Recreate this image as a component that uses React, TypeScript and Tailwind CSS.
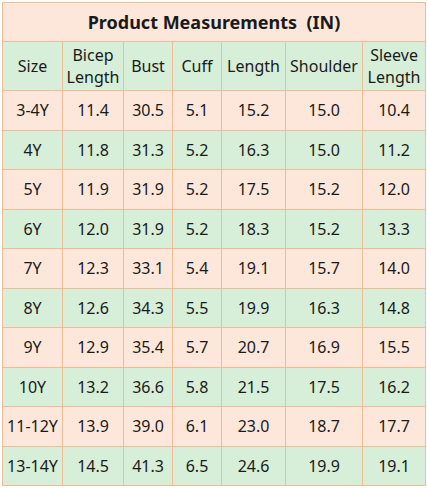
const cols = ['w-[60px]', 'w-[61px]', 'w-[49px]', 'w-[49px]', 'w-[64px]', 'w-[77px]', 'w-[63px]'];

const headers: string[][] = [
  ['Size'],
  ['Bicep', 'Length'],
  ['Bust'],
  ['Cuff'],
  ['Length'],
  ['Shoulder'],
  ['Sleeve', 'Length'],
];

const rows: string[][] = [
  ['3-4Y', '11.4', '30.5', '5.1', '15.2', '15.0', '10.4'],
  ['4Y', '11.8', '31.3', '5.2', '16.3', '15.0', '11.2'],
  ['5Y', '11.9', '31.9', '5.2', '17.5', '15.2', '12.0'],
  ['6Y', '12.0', '31.9', '5.2', '18.3', '15.2', '13.3'],
  ['7Y', '12.3', '33.1', '5.4', '19.1', '15.7', '14.0'],
  ['8Y', '12.6', '34.3', '5.5', '19.9', '16.3', '14.8'],
  ['9Y', '12.9', '35.4', '5.7', '20.7', '16.9', '15.5'],
  ['10Y', '13.2', '36.6', '5.8', '21.5', '17.5', '16.2'],
  ['11-12Y', '13.9', '39.0', '6.1', '23.0', '18.7', '17.7'],
  ['13-14Y', '14.5', '41.3', '6.5', '24.6', '19.9', '19.1'],
];

export default function App() {
  return (
    <div className="w-[427px] h-[488px] bg-white pl-[2px] pt-[2px] font-['Noto_Sans',sans-serif] text-[#1a1a1a]">
      <table className="table-fixed border-collapse w-[423px]">
        <colgroup>
          {cols.map((c, i) => (
            <col key={i} className={c} />
          ))}
        </colgroup>
        <thead>
          <tr className="h-[39px] bg-[#fde7da]">
            <th colSpan={7} className="border border-[#f0bc96] text-[18px] font-bold text-center">
              Product Measurements&nbsp;&nbsp;(IN)
            </th>
          </tr>
          <tr className="h-[49px] bg-[#d7eed9]">
            {headers.map((h, i) => (
              <th key={i} className="border border-[#f0bc96] font-normal text-[16px] leading-[22px] text-center whitespace-nowrap">
                {h.map((line, j) => (
                  <div key={j}>{line}</div>
                ))}
              </th>
            ))}
          </tr>
        </thead>
        <tbody>
          {rows.map((r, i) => (
            <tr key={i} className={`h-[39.5px] ${i % 2 === 0 ? 'bg-[#fde7da]' : 'bg-[#d7eed9]'}`}>
              {r.map((v, j) => (
                <td key={j} className="border border-[#f0bc96] text-[16px] text-center whitespace-nowrap">
                  {v}
                </td>
              ))}
            </tr>
          ))}
        </tbody>
      </table>
    </div>
  );
}
